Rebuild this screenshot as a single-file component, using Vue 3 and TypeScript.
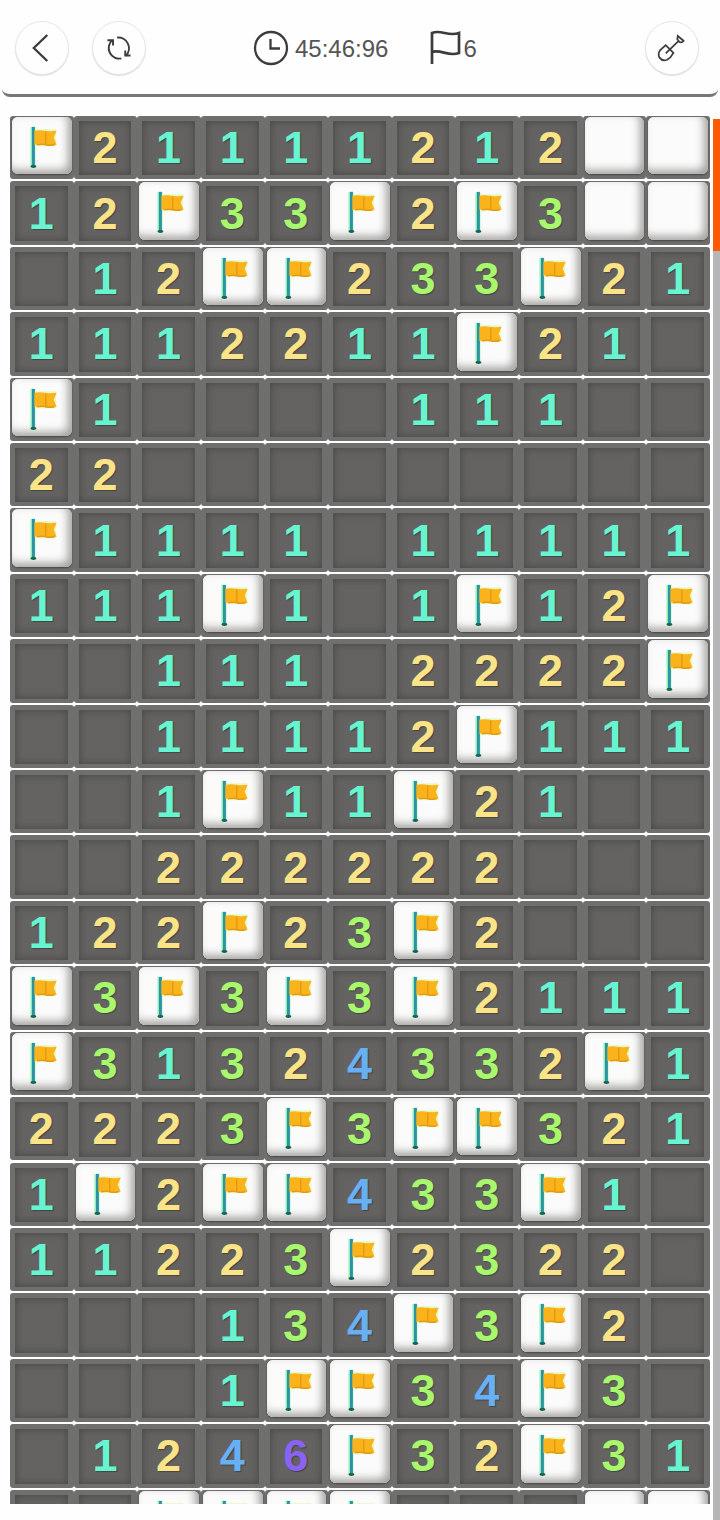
<script setup lang="ts">
interface Cell {
  kind: 'open' | 'flag' | 'covered'
  value: string
}

const layout: string[] = [
  'F21111212##',
  '12F33F2F3##',
  '.12FF233F21',
  '1112211F21.',
  'F1....111..',
  '22.........',
  'F1111.11111',
  '111F1.1F12F',
  '..111.2222F',
  '..11112F111',
  '..1F11F21..',
  '..222222...',
  '122F23F2...',
  'F3F3F3F2111',
  'F31324332F1',
  '2223F3FF321',
  '1F2FF433F1.',
  '11223F2322.',
  '...134F3F2.',
  '...1FF34F3.',
  '.1246F32F31',
  '..FFFF...##',
]

const cells: Cell[] = layout.flatMap((row) =>
  [...row].map((c): Cell => {
    if (c === 'F') return { kind: 'flag', value: '' }
    if (c === '#') return { kind: 'covered', value: '' }
    return { kind: 'open', value: c === '.' ? '' : c }
  }),
)

const time = '45:46:96'
const flagsLeft = 6
</script>

<template>
  <div class="game">
    <header class="bar">
      <div class="left">
        <button class="round" type="button" aria-label="Back">
          <svg viewBox="0 0 54 54"><path d="M32.500 13.500 18.500 27 32.500 40.500" stroke-width="2.400" /></svg>
        </button>
        <button class="round" type="button" aria-label="Restart">
          <svg viewBox="0 0 54 54" stroke-width="2">
            <path d="M25 16.200A11 11 0 0 1 34 35" />
            <path d="M33.500 29.500V34.800H39" />
            <path d="M29.500 37.800A11 11 0 0 1 20 18.800" />
            <path d="M15 19H20.800V24.500" />
          </svg>
        </button>
      </div>
      <div class="stat time">
        <svg class="clock" viewBox="0 0 36 36"><circle cx="18" cy="18" r="16" /><path d="M17.500 9V18.500H27" /></svg>
        <span>{{ time }}</span>
      </div>
      <div class="stat flags">
        <svg class="pennant" viewBox="0 0 32 36"><path d="M3 34V3C12-1 19 7 30 3V23C19 27 12 19 3 22" /></svg>
        <span>{{ flagsLeft }}</span>
      </div>
      <button class="round dig" type="button" aria-label="Dig mode">
        <svg viewBox="0 0 54 54" stroke-width="1.800">
          <path d="M20.500 24 14.500 29.500Q12 33 14 37Q17 41 21.500 39.500Q26 37 28.500 32Z" />
          <path d="M20.500 32.500 34.500 19M33 14.500 39 19.500Q38 21.500 35 21L32.500 18Z" />
        </svg>
      </button>
    </header>

    <main class="field">
      <div class="board" aria-label="Minefield">
        <div v-for="(cell, i) in cells" :key="i" class="cell">
          <span v-if="cell.kind === 'open'" class="pit" :class="cell.value && 'n' + cell.value">{{ cell.value }}</span>
          <button v-else class="tile" type="button" :aria-label="cell.kind === 'flag' ? 'Flagged' : 'Covered'">
            <svg v-if="cell.kind === 'flag'" class="flag" viewBox="0 0 60 58">
              <path class="glow" d="M21 10V50" />
              <path class="cloth-glow" d="M22 14H43V28H22Z" />
              <path class="pole" d="M21.500 10V50" />
              <path class="cloth" d="M22.500 14Q28 13 33 14T45 14L42 21 45 28Q39 29 34 28T22.500 28Z" />
              <path class="fold" d="M34 15V28M25 28Q31 27 34 28T43 28" />
              <ellipse class="foot" cx="21.500" cy="50" rx="3" ry="1.500" />
            </svg>
          </button>
        </div>
      </div>
      <div class="track"><div class="thumb"></div></div>
    </main>
  </div>
</template>

<style>
body {
  margin: 0;
  background: #fefefe;
}
</style>

<style scoped>
.game {
  height: 100vh;
  display: flex;
  flex-direction: column;
  overflow: hidden;
  font-family: "Liberation Sans", Arial, sans-serif;
}
.bar {
  flex: none;
  height: 97px;
  margin: 0 2px;
  padding: 2px 19px 0 13px;
  box-sizing: border-box;
  display: flex;
  align-items: center;
  border-bottom: 3px solid #777;
  border-radius: 0 0 8px 8px;
  background: #fefefe;
}
.left {
  display: flex;
  gap: 23px;
}
.round {
  width: 54px;
  height: 54px;
  padding: 0;
  border: 1px solid #e6e6e6;
  border-radius: 50%;
  background: #fefefe;
  box-shadow: 0 1px 1px #dedede;
}
.round svg {
  display: block;
  width: 100%;
  height: 100%;
}
svg {
  fill: none;
  stroke: #3c3c3c;
}
.stat {
  display: flex;
  align-items: center;
  font-size: 24px;
  color: #555;
}
.stat span {
  padding-top: 2px;
}
.time {
  margin-left: 107px;
  gap: 6px;
}
.flags {
  margin-left: 41px;
  gap: 2px;
}
.clock {
  width: 36px;
  height: 36px;
  stroke-width: 2.300;
}
.pennant {
  width: 32px;
  height: 36px;
  stroke-width: 2.700;
}
.dig {
  margin-left: auto;
}
.field {
  flex: 1;
  min-height: 0;
  display: flex;
  gap: 3px;
  padding: 19px 0 0 10px;
}
.board {
  flex: 1;
  margin-bottom: 16px;
  overflow: hidden;
  display: grid;
  grid-template-columns: repeat(11, 1fr);
  align-content: start;
  row-gap: 2px;
}
.cell {
  aspect-ratio: 272 / 271;
  min-width: 0;
  box-sizing: border-box;
  display: flex;
  border-radius: 3px;
  background: #6f6f6d;
}
.pit {
  flex: 1;
  min-width: 0;
  margin: 5px 6px 4px 5px;
  display: flex;
  align-items: center;
  justify-content: center;
  background: #646361;
  box-shadow: inset 0 0 7px 1px #4b4a48;
  font-size: 45px;
  line-height: 46px;
  font-weight: 700;
  text-shadow: 1px 1px 1px #444;
}
.n1 { color: #66f5d0; }
.n2 { color: #fbe487; }
.n3 { color: #a9f76c; }
.n4 { color: #68b0f5; }
.n6 { color: #8a63f5; }
.tile {
  flex: 1;
  min-width: 0;
  margin: 1px 2px 5px;
  padding: 0;
  border: 0;
  border-radius: 6px;
  background: #fbfbfb;
  box-shadow: inset -4px -4px 8px #a3a2a0, inset 3px 1px 3px #fff, 0 1px 2px #454545;
}
.flag {
  display: block;
  width: 100%;
  height: 100%;
}
.flag path { stroke: none; }
.flag .glow { stroke: #9af5bd; stroke-width: 5; }
.flag .cloth-glow { stroke: #e4f9c4; stroke-width: 3; }
.flag .pole { stroke: #2e93a0; stroke-width: 3; }
.flag .cloth { fill: #fbb31c; }
.flag .fold { stroke: #e59a14; stroke-width: 1.500; }
.flag .foot { fill: #17634f; stroke: none; }
.track {
  flex: none;
  width: 7px;
  margin-top: 3px;
  background: #b6b6b6;
}
.thumb {
  height: 132px;
  background: #fb5a02;
}
</style>
